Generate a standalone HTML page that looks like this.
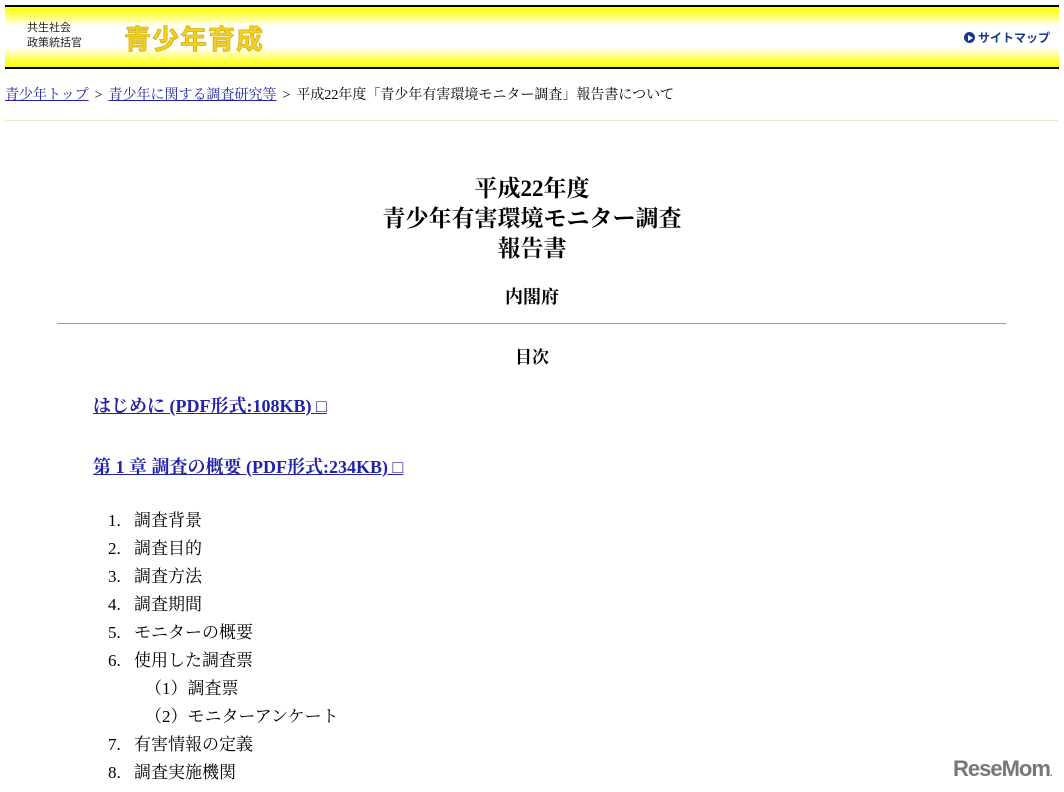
<!DOCTYPE html>
<html><head><meta charset="utf-8"><style>
body{margin:0;width:1064px;height:792px;background:#fff;position:relative;overflow:hidden;font-family:"Liberation Serif","Noto Serif CJK SC","Noto Sans CJK JP",serif;color:#000}
.a{position:absolute;white-space:nowrap}
.hdr{position:absolute;left:5px;top:5px;width:1054px;height:60px;border-top:2px solid #000;border-bottom:2px solid #000;background:linear-gradient(#ffff00 0%,#ffff66 15%,#fff 32%,#fff 68%,#ffff66 85%,#ffff00 100%)}
.sans{font-family:"Liberation Sans","Noto Sans CJK JP",sans-serif}
a{color:#2222aa}
.c{left:0;width:1064px;text-align:center;font-weight:bold}
.li{font-size:17px;left:108px}
.li b{font-weight:normal;display:inline-block;width:26px}
.g{margin:0 6px}
</style></head><body>
<div class="hdr"></div>
<div class="a sans" style="left:27px;top:21px;font-size:11px;line-height:15px;color:#222">共生社会<br>政策統括官</div>
<div class="a sans" style="left:124px;top:18px;font-size:27px;font-weight:bold;color:#f3d01c;letter-spacing:1px;-webkit-text-stroke:0.6px #c9a200">青少年育成</div>
<div class="a sans" style="left:964px;top:29px;font-size:12px;font-weight:bold;color:#1a3a8a"><span style="display:inline-block;width:11px;height:11px;border-radius:50%;background:#1a3a8a;vertical-align:-1px;position:relative;margin-right:3px"><span style="position:absolute;left:4px;top:2.5px;border-left:5px solid #fff;border-top:3px solid transparent;border-bottom:3px solid transparent"></span></span>サイトマップ</div>
<div class="a" style="left:5px;top:84px;font-size:14px"><a href="#">青少年トップ</a><span class="g">&gt;</span><a href="#">青少年に関する調査研究等</a><span class="g">&gt;</span>平成22年度「青少年有害環境モニター調査」報告書について</div>
<div class="a" style="left:5px;top:120px;width:1053px;border-top:1px solid #eee8c0"></div>
<div class="a c" style="top:174px;font-size:23px;line-height:30px">平成22年度<br>青少年有害環境モニター調査<br>報告書</div>
<div class="a c" style="top:283px;font-size:18px">内閣府</div>
<div class="a" style="left:57px;top:323px;width:949px;border-top:1px solid #999"></div>
<div class="a c" style="top:343px;font-size:17px">目次</div>
<div class="a" style="left:93px;top:392px;font-size:18px;font-weight:bold"><a href="#">はじめに (PDF形式:108KB) □</a></div>
<div class="a" style="left:93px;top:453px;font-size:18px;font-weight:bold"><a href="#">第 1 章 調査の概要 (PDF形式:234KB) □</a></div>
<div class="a li" style="top:506px"><b>1.</b>調査背景</div>
<div class="a li" style="top:534px"><b>2.</b>調査目的</div>
<div class="a li" style="top:562px"><b>3.</b>調査方法</div>
<div class="a li" style="top:590px"><b>4.</b>調査期間</div>
<div class="a li" style="top:618px"><b>5.</b>モニターの概要</div>
<div class="a li" style="top:646px"><b>6.</b>使用した調査票</div>
<div class="a li" style="top:674px;left:145px">（1）調査票</div>
<div class="a li" style="top:702px;left:145px">（2）モニターアンケート</div>
<div class="a li" style="top:730px"><b>7.</b>有害情報の定義</div>
<div class="a li" style="top:758px"><b>8.</b>調査実施機関</div>
<div class="a sans" style="left:953px;top:756px;font-size:22px;font-weight:bold;color:#777;letter-spacing:-1px">ReseMom<span style="font-size:10px">.</span></div>
</body></html>
